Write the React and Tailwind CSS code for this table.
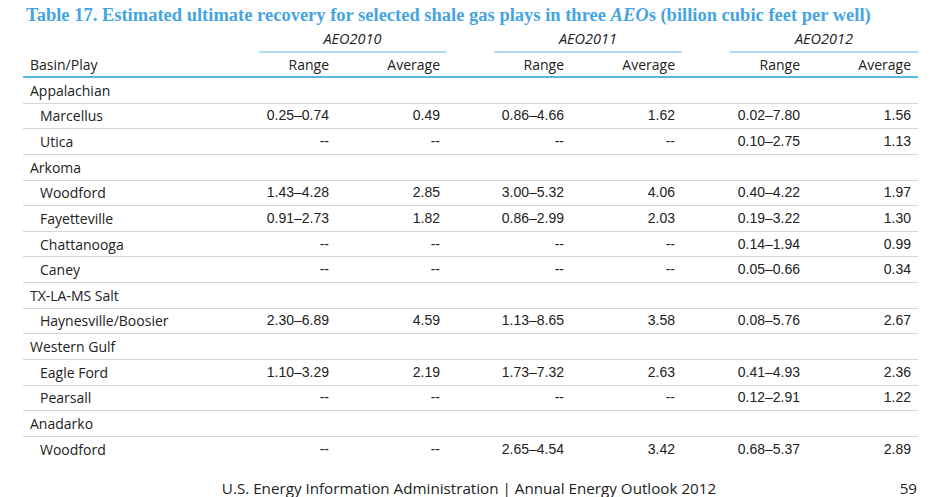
import React from "react";

const GROUPS = ["AEO2010", "AEO2011", "AEO2012"];

const ROWS = [
  { name: "Appalachian", basin: true },
  { name: "Marcellus", v: ["0.25–0.74", "0.49", "0.86–4.66", "1.62", "0.02–7.80", "1.56"] },
  { name: "Utica", v: ["--", "--", "--", "--", "0.10–2.75", "1.13"] },
  { name: "Arkoma", basin: true },
  { name: "Woodford", v: ["1.43–4.28", "2.85", "3.00–5.32", "4.06", "0.40–4.22", "1.97"] },
  { name: "Fayetteville", v: ["0.91–2.73", "1.82", "0.86–2.99", "2.03", "0.19–3.22", "1.30"] },
  { name: "Chattanooga", v: ["--", "--", "--", "--", "0.14–1.94", "0.99"] },
  { name: "Caney", v: ["--", "--", "--", "--", "0.05–0.66", "0.34"] },
  { name: "TX-LA-MS Salt", basin: true },
  { name: "Haynesville/Boosier", v: ["2.30–6.89", "4.59", "1.13–8.65", "3.58", "0.08–5.76", "2.67"] },
  { name: "Western Gulf", basin: true },
  { name: "Eagle Ford", v: ["1.10–3.29", "2.19", "1.73–7.32", "2.63", "0.41–4.93", "2.36"] },
  { name: "Pearsall", v: ["--", "--", "--", "--", "0.12–2.91", "1.22"] },
  { name: "Anadarko", basin: true },
  { name: "Woodford", v: ["--", "--", "2.65–4.54", "3.42", "0.68–5.37", "2.89"] },
];

const cols = "grid grid-cols-[236px_70px_117px_48px_70px_118px_48px_70px_118px]";
const sans = "font-['Open_Sans',sans-serif]";
const num = "font-['Liberation_Sans',Arial,sans-serif]";

function Row({ row, last }) {
  const border = last ? "" : "border-b border-[#d4d4d4]";
  return (
    <div className={`${cols} h-[25.64px] items-center ${border} text-[14px] text-[#222]`}>
      <div className={`${sans} ${row.basin ? "pl-[7px]" : "pl-[17px]"}`}>{row.name}</div>
      {row.basin ? null : (
        <>
          <div className={`${num} text-right`}>{row.v[0]}</div>
          <div className={`${num} text-right pr-[6px]`}>{row.v[1]}</div>
          <div />
          <div className={`${num} text-right`}>{row.v[2]}</div>
          <div className={`${num} text-right pr-[7px]`}>{row.v[3]}</div>
          <div />
          <div className={`${num} text-right`}>{row.v[4]}</div>
          <div className={`${num} text-right pr-[7px]`}>{row.v[5]}</div>
        </>
      )}
    </div>
  );
}

export default function App() {
  return (
    <div className="w-[935px] h-[497px] bg-white overflow-hidden relative">
      <div className="pl-[26px] pt-[4px] h-[28px] font-['Liberation_Serif',serif] font-bold text-[18.5px] leading-[22px] text-[#45a4e2] whitespace-nowrap">
        Table 17. Estimated ultimate recovery for selected shale gas plays in three <i>AEO</i>s (billion cubic feet per well)
      </div>
      <div className="pl-[23px] w-[918px]">
        <div className={`${cols} ${sans} text-[14.5px] text-[#222]`}>
          <div />
          {GROUPS.map((g, i) => (
            <React.Fragment key={g}>
              {i > 0 && <div />}
              <div className="col-span-2 h-[25px] flex items-end justify-center italic border-b-2 border-[#b3dbf4] pb-[5px] leading-none">
                {g}
              </div>
            </React.Fragment>
          ))}
        </div>
        <div className={`${cols} ${sans} h-[25px] items-center text-[14px] text-[#222] border-b-2 border-[#5db5e6]`}>
          <div className="pl-[7px]">Basin/Play</div>
          <div className="text-right">Range</div>
          <div className="text-right pr-[6px]">Average</div>
          <div />
          <div className="text-right">Range</div>
          <div className="text-right pr-[7px]">Average</div>
          <div />
          <div className="text-right">Range</div>
          <div className="text-right pr-[7px]">Average</div>
        </div>
        {ROWS.map((r, i) => (
          <Row key={i} row={r} last={i === ROWS.length - 1} />
        ))}
      </div>
      <div className={`${sans} flex items-center mt-[15px] h-[22px] text-[15.2px] text-[#222]`}>
        <div className="flex-1 text-center pl-[3px]">
          U.S. Energy Information Administration | Annual Energy Outlook 2012
        </div>
        <div className="absolute right-[18px]">59</div>
      </div>
    </div>
  );
}
